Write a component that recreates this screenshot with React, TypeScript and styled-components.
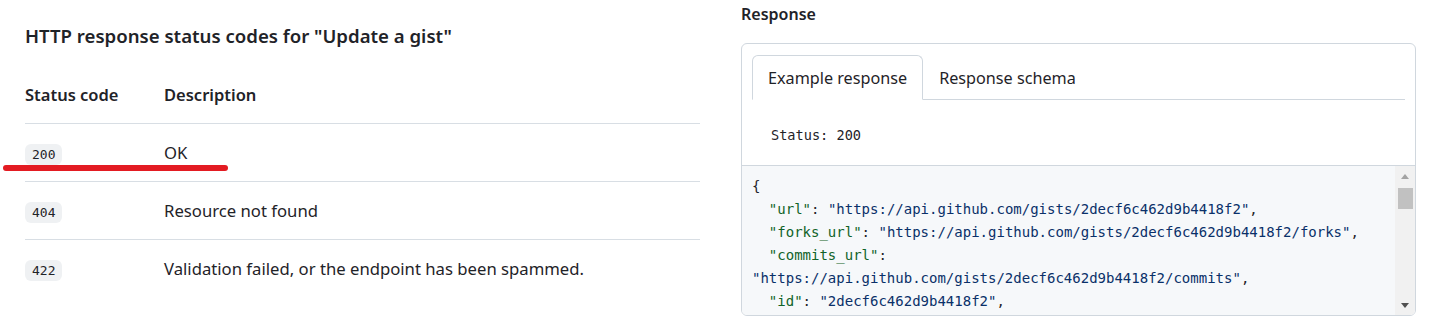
import styled, { createGlobalStyle } from "styled-components";

const GlobalStyle = createGlobalStyle`
  body {
    margin: 0;
    background: #ffffff;
    color: #1f2328;
    font-family: "Noto Sans", "Liberation Sans", sans-serif;
  }
`;

const Page = styled.div`
  position: relative;
  display: flex;
  gap: 41px;
  padding: 0 37px 0 25px;
  height: 335px;
  overflow: hidden;
`;

const Column = styled.section`
  flex: 1;
  min-width: 0;
`;

const Heading = styled.h3`
  margin: 21px 0 15px;
  font-size: 18.6px;
  line-height: 30px;
  font-weight: 600;
`;

const Table = styled.table`
  width: 100%;
  border-collapse: collapse;
`;

const HeadCell = styled.th<{ $first?: boolean }>`
  width: ${(p) => (p.$first ? "139px" : "auto")};
  padding: 16px 0 15px;
  text-align: left;
  font-size: 16.5px;
  line-height: 26px;
  font-weight: 600;
`;

const Row = styled.tr`
  border-top: 1px solid #d8dee4;
`;

const Cell = styled.td`
  padding: 16px 0 15px;
  font-size: 16.7px;
  line-height: 26px;
  vertical-align: middle;
`;

const Badge = styled.code`
  display: inline-block;
  padding: 2px 7px;
  border-radius: 6px;
  background: #eff1f3;
  font-family: "DejaVu Sans Mono", "Liberation Mono", monospace;
  font-size: 13px;
  line-height: 17px;
  color: #1f2328;
`;

const Marker = styled.div`
  position: absolute;
  left: 3px;
  top: 165px;
  width: 225px;
  height: 6px;
  border-radius: 3px;
  background: #e31b22;
`;

const Label = styled.h4`
  margin: 2px 0 17px;
  font-size: 16px;
  line-height: 24px;
  font-weight: 600;
`;

const Box = styled.div`
  border: 1px solid #d0d7de;
  border-radius: 6px;
  overflow: hidden;
`;

const TabBar = styled.div`
  display: flex;
  margin: 11px 10px 0;
  border-bottom: 1px solid #d0d7de;
`;

const Tab = styled.button<{ $active?: boolean }>`
  height: 45px;
  margin-bottom: -1px;
  padding: 0 15px;
  border: 1px solid ${(p) => (p.$active ? "#d0d7de" : "transparent")};
  border-bottom-color: ${(p) => (p.$active ? "#ffffff" : "transparent")};
  border-radius: 6px 6px 0 0;
  background: ${(p) => (p.$active ? "#ffffff" : "transparent")};
  color: #1f2328;
  font-family: inherit;
  font-size: 16.2px;
  cursor: pointer;
`;

const Status = styled.p`
  margin: 0;
  padding: 24px 0 19px 29px;
  font-family: "DejaVu Sans Mono", "Liberation Mono", monospace;
  font-size: 13.6px;
  line-height: 22px;
`;

const CodeArea = styled.div`
  display: flex;
  height: 149px;
  border-top: 1px solid #d0d7de;
  background: #f6f8fa;
`;

const Pre = styled.pre`
  flex: 1;
  margin: 0;
  padding: 9px 10px 0;
  overflow: hidden;
  white-space: pre;
  font-family: "DejaVu Sans Mono", "Liberation Mono", monospace;
  font-size: 14px;
  line-height: 23px;
  color: #1f2328;
`;

const Key = styled.span`
  color: #116329;
`;

const Str = styled.span`
  color: #0a3069;
`;

const Track = styled.div`
  display: flex;
  flex-direction: column;
  width: 20px;
  background: #f1f1f1;
`;

const ArrowButton = styled.div<{ $down?: boolean; $color: string }>`
  display: flex;
  align-items: center;
  justify-content: center;
  height: 20px;

  &::before {
    content: "";
    border-left: 4.5px solid transparent;
    border-right: 4.5px solid transparent;
    ${(p) =>
      p.$down
        ? `border-top: 5px solid ${p.$color};`
        : `border-bottom: 5px solid ${p.$color};`}
  }
`;

const Thumb = styled.div`
  height: 21px;
  margin: 2px 2px 0 3px;
  background: #c1c1c1;
`;

const Spacer = styled.div`
  flex: 1;
`;

const rows = [
  { code: "200", text: "OK" },
  { code: "404", text: "Resource not found" },
  { code: "422", text: "Validation failed, or the endpoint has been spammed." },
];

const base = "https://api.github.com/gists/2decf6c462d9b4418f2";

export default function App() {
  return (
    <>
      <GlobalStyle />
      <Page>
        <Column>
          <Heading>HTTP response status codes for "Update a gist"</Heading>
          <Table>
            <thead>
              <tr>
                <HeadCell $first>Status code</HeadCell>
                <HeadCell>Description</HeadCell>
              </tr>
            </thead>
            <tbody>
              {rows.map((r) => (
                <Row key={r.code}>
                  <Cell>
                    <Badge>{r.code}</Badge>
                  </Cell>
                  <Cell>{r.text}</Cell>
                </Row>
              ))}
            </tbody>
          </Table>
        </Column>

        <Column>
          <Label>Response</Label>
          <Box>
            <TabBar>
              <Tab $active>Example response</Tab>
              <Tab>Response schema</Tab>
            </TabBar>
            <Status>Status: 200</Status>
            <CodeArea>
              <Pre>
                {"{\n  "}
                <Key>"url"</Key>: <Str>"{base}"</Str>
                {",\n  "}
                <Key>"forks_url"</Key>: <Str>"{base}/forks"</Str>
                {",\n  "}
                <Key>"commits_url"</Key>
                {":\n"}
                <Str>"{base}/commits"</Str>
                {",\n  "}
                <Key>"id"</Key>: <Str>"2decf6c462d9b4418f2"</Str>
                {","}
              </Pre>
              <Track>
                <ArrowButton $color="#a3a3a3" />
                <Thumb />
                <Spacer />
                <ArrowButton $down $color="#505050" />
              </Track>
            </CodeArea>
          </Box>
        </Column>
        <Marker />
      </Page>
    </>
  );
}
